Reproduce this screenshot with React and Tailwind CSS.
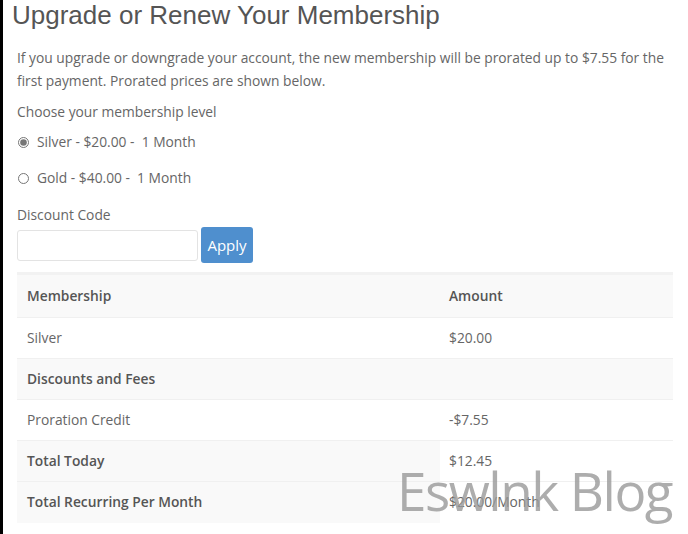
import { useState } from "react";

const rows = [
  { label: "Silver", amount: "$20.00", bold: false, left: "bg-white", right: "bg-white" },
  { label: "Discounts and Fees", amount: "", bold: true, left: "bg-[#f9f9f9]", right: "bg-[#f9f9f9]" },
  { label: "Proration Credit", amount: "-$7.55", bold: false, left: "bg-white", right: "bg-white" },
  { label: "Total Today", amount: "$12.45", bold: true, left: "bg-[#f9f9f9]", right: "bg-white" },
  { label: "Total Recurring Per Month", amount: "$20.00/Month", bold: true, left: "bg-[#f9f9f9]", right: "bg-white" },
];

export default function App() {
  const [level, setLevel] = useState("silver");

  return (
    <div className="relative min-h-[534px] w-[688px] overflow-hidden border-l-[3px] border-black bg-white font-['Open_Sans',sans-serif] text-[13.8px] text-[#666]">
      <h1 className="pl-[9px] pt-[1px] font-['Liberation_Sans',Arial,sans-serif] text-[26px] leading-[28px] text-[#555]">
        Upgrade or Renew Your Membership
      </h1>

      <div className="pl-[14px] pr-[15px]">
        <p className="mt-[17px] leading-[23px]">
          If you upgrade or downgrade your account, the new membership will be prorated up to $7.55 for the first payment. Prorated prices are shown below.
        </p>

        <p className="mt-[8px] leading-[23px]">Choose your membership level</p>

        <label className="mt-[8px] flex h-[23px] items-center gap-[8px] pl-[1px]">
          <input
            type="radio"
            name="level"
            checked={level === "silver"}
            onChange={() => setLevel("silver")}
            className="h-[11px] w-[11px] accent-[#777]"
          />
          <span>Silver - $20.00 -&nbsp; 1 Month</span>
        </label>
        <label className="mt-[13px] flex h-[23px] items-center gap-[8px] pl-[1px]">
          <input
            type="radio"
            name="level"
            checked={level === "gold"}
            onChange={() => setLevel("gold")}
            className="h-[11px] w-[11px] accent-[#777]"
          />
          <span>Gold - $40.00 -&nbsp; 1 Month</span>
        </label>

        <p className="mt-[13px] leading-[23px]">Discount Code</p>
        <div className="mt-[1px] flex items-center gap-[3px]">
          <input
            type="text"
            className="h-[31px] w-[181px] rounded-[3px] border border-[#e3e3e3] bg-white px-2 outline-none"
          />
          <button className="h-[36px] w-[52px] rounded-[3px] bg-[#4f8fce] text-[15px] text-white">
            Apply
          </button>
        </div>

        <table className="mt-[9px] w-[656px] table-fixed border-collapse">
          <colgroup>
            <col className="w-[423px]" />
            <col className="w-[233px]" />
          </colgroup>
          <thead>
            <tr className="h-[44px] border-t-[3px] border-[#f2f2f2] bg-[#f9f9f9] text-left font-semibold text-[#555]">
              <th className="pl-[10px] font-semibold">Membership</th>
              <th className="pl-[9px] font-semibold">Amount</th>
            </tr>
          </thead>
          <tbody>
            {rows.map((r) => (
              <tr key={r.label} className="h-[41px] border-t border-[#f0f0f0]">
                <td className={`${r.left} pl-[10px] ${r.bold ? "font-semibold text-[#555]" : ""}`}>{r.label}</td>
                <td className={`${r.right} pl-[9px]`}>{r.amount}</td>
              </tr>
            ))}
          </tbody>
        </table>
      </div>

      <div className="pointer-events-none absolute left-[394px] top-[456px] font-['Open_Sans',sans-serif] text-[53px] leading-[70px] tracking-[-1.5px] text-[#999]/80">
        Eswlnk Blog
      </div>
    </div>
  );
}
